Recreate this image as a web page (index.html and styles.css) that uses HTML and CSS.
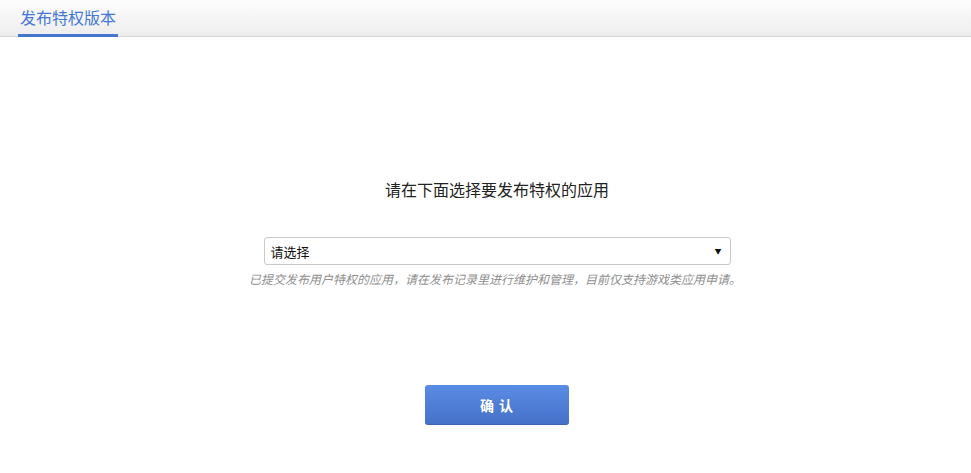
FILE: index.html
```html
<!DOCTYPE html>
<html lang="zh-CN">
<head>
  <meta charset="UTF-8" />
  <title>发布特权版本</title>
  <link rel="stylesheet" href="styles.css">
</head>
<body>

  <div class="topbar">
    <a class="tab active" href="#">发布特权版本</a>
  </div>

  <div class="main">
    <h2 class="title">请在下面选择要发布特权的应用</h2>

    <div class="select-box">
      <span class="select-text">请选择</span>
      <span class="select-arrow">&#9660;</span>
    </div>
    <p class="hint">已提交发布用户特权的应用，请在发布记录里进行维护和管理，目前仅支持游戏类应用申请。</p>

    <button type="button" class="btn-ok">确 认</button>
  </div>

</body>
</html>
```

FILE: styles.css
```css
body {
  margin: 0;
  background-color: #fff;
  color: #333;
  font-family: "Microsoft YaHei", "Noto Sans CJK SC", "Liberation Sans", sans-serif;
}
.topbar {
  height: 37px;
  background: linear-gradient(#fdfdfd, #ededed);
  border-bottom: 1px solid #d6d6d6;
  padding-left: 18px;
  box-sizing: border-box;
  display: flex;
  align-items: flex-end;
}
.tab {
  display: block;
  color: #4577d5;
  text-decoration: none;
  font-size: 16px;
  line-height: 20px;
  padding: 5px 2px 7px 2px;
  border-bottom: 3px solid #4675cf;
  margin-bottom: -1px;
}
.main {
  padding-left: 23px;
  display: flex;
  flex-direction: column;
  align-items: center;
}
.title {
  margin: 141px 0 0 0;
  font-size: 16px;
  font-weight: normal;
  line-height: 22px;
  color: #222;
}
.select-box {
  margin-top: 37px;
  width: 467px;
  height: 28px;
  box-sizing: border-box;
  border: 1px solid #c9c9c9;
  border-radius: 3px;
  display: flex;
  align-items: center;
  justify-content: space-between;
  padding: 0 8px 0 6px;
  font-size: 13px;
  color: #111;
}
.select-arrow {
  font-size: 7px;
  color: #111;
}
.hint {
  margin: 5px 0 0 -4px;
  font-size: 12px;
  line-height: 18px;
  font-style: italic;
  color: #8f8f8f;
}
.btn-ok {
  margin-top: 97px;
  width: 144px;
  height: 40px;
  border: none;
  border-radius: 3px;
  background: linear-gradient(#5a8ce3, #4671c9);
  border-bottom: 1px solid #3e63b3;
  color: #fff;
  font-family: inherit;
  font-size: 14px;
  font-weight: bold;
  letter-spacing: 1px;
  cursor: pointer;
}
```
